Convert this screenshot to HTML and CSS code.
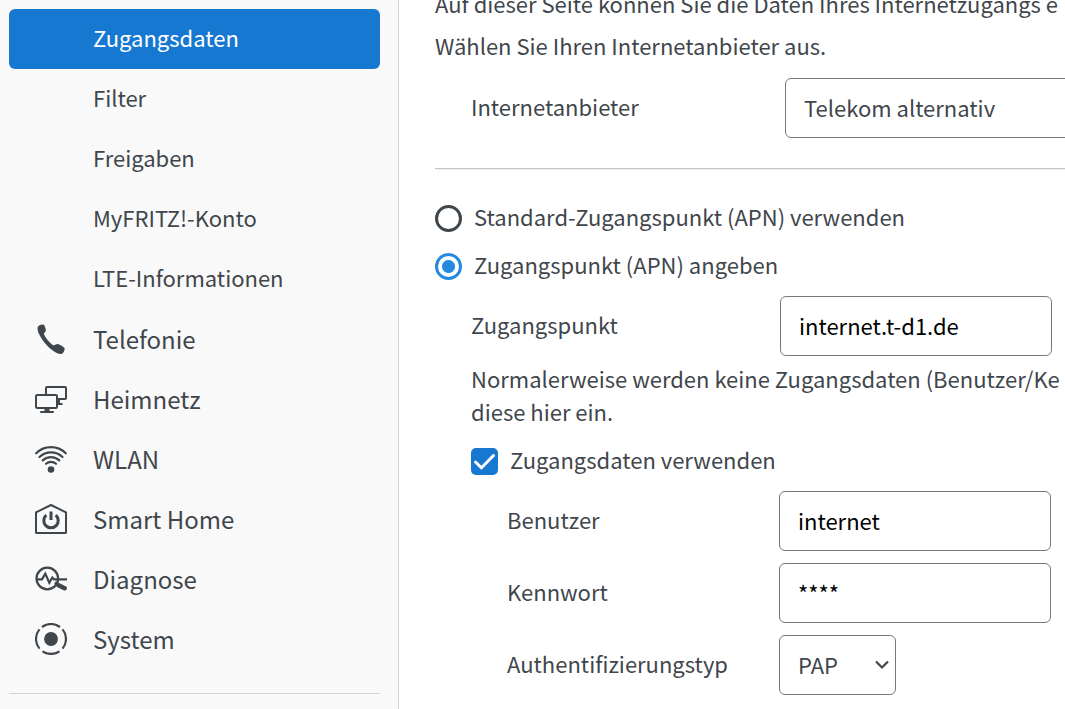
FILE: index.html
```html
<!DOCTYPE html>
<html lang="de">
<head>
<meta charset="utf-8">
<meta name="viewport" content="width=device-width, initial-scale=1">
<title>Zugangsdaten</title>
<link rel="stylesheet" href="styles.css">
</head>
<body>
<div class="app">
  <nav class="sidebar" aria-label="Menü">
    <ul class="menu">
      <li><a class="item sub active" href="#zugangsdaten" aria-current="page"><span>Zugangsdaten</span></a></li>
      <li><a class="item sub" href="#filter"><span>Filter</span></a></li>
      <li><a class="item sub" href="#freigaben"><span>Freigaben</span></a></li>
      <li><a class="item sub" href="#myfritz"><span>MyFRITZ!-Konto</span></a></li>
      <li><a class="item sub" href="#lte"><span>LTE-Informationen</span></a></li>
      <li><a class="item" href="#telefonie">
        <svg class="icon" viewBox="0 0 32 32" aria-hidden="true"><path fill="currentColor" d="M3 3.600C4.400 1.800 7.200 1.200 8.700 1.700C9.600 2.100 10.800 6 10.900 7.200C11 8.600 8.900 9.700 9 10.900C9.900 14.400 15 20.200 18.400 22.200C19.700 22.800 21.200 20.900 22.800 21.100C24.500 21.400 29.200 24.300 29.600 25.400C30 27.100 28.300 30.300 26.500 31C24.300 31.600 20.500 29.400 17.400 27.200C12.200 23.500 6.900 16.900 4 11C2.800 8.500 1.900 5.100 3 3.600Z"/></svg>
        <span>Telefonie</span></a></li>
      <li><a class="item" href="#heimnetz">
        <svg class="icon" viewBox="0 0 32 32" aria-hidden="true"><g fill="none" stroke="currentColor" stroke-width="2"><path d="M11 11V5Q11 4 12 4H30Q31 4 31 5V15Q31 16 30 16H23M24 17V20M22.500 21H27.500"/><rect x="1" y="12" width="21" height="13" rx="1.200"/><path d="M6 29H18" stroke-linecap="round"/></g><path fill="currentColor" d="M9.500 25H14.500V29H9.500Z"/></svg>
        <span>Heimnetz</span></a></li>
      <li><a class="item" href="#wlan">
        <svg class="icon" viewBox="0 0 32 32" aria-hidden="true"><circle cx="16" cy="26.500" r="3.300" fill="currentColor"/><g fill="none" stroke="currentColor" stroke-width="2.200" stroke-linecap="round"><path d="M1.200 10.300A21 21 0 0 1 30.800 10.300"/><path d="M4.500 14A16.500 16.500 0 0 1 27.500 14"/><path d="M7.700 17.400A12 12 0 0 1 24.300 17.400"/><path d="M11 20.800A7.500 7.500 0 0 1 21 20.800"/></g></svg>
        <span>WLAN</span></a></li>
      <li><a class="item" href="#smarthome">
        <svg class="icon" viewBox="0 0 32 32" aria-hidden="true"><g fill="none" stroke="currentColor" stroke-width="2"><path stroke-linejoin="round" d="M1 9.400L16 2L31 9.400V29.500Q31 30 30.400 30H1.600Q1 30 1 29.500Z"/><path stroke-width="3" d="M11.300 12.200A7.200 7.200 0 1 0 20.700 12.200M16 8.500V17"/></g></svg>
        <span>Smart Home</span></a></li>
      <li><a class="item" href="#diagnose">
        <svg class="icon" viewBox="0 0 32 32" aria-hidden="true"><g fill="none" stroke="currentColor" stroke-width="2.200"><circle cx="12.300" cy="15.500" r="10.800"/><path d="M1.200 16.300H7L10.300 10.600L14.300 19.700L17.300 14.500L19 16.300H32"/><path stroke-width="3" d="M20 19.500L24 22"/><path stroke-width="4.600" stroke-linecap="round" d="M23.500 22.200L29.600 25.200"/></g></svg>
        <span>Diagnose</span></a></li>
      <li><a class="item" href="#system">
        <svg class="icon" viewBox="0 0 32 32" aria-hidden="true"><circle cx="16" cy="16" r="6.900" fill="currentColor"/><path fill="none" stroke="currentColor" stroke-width="2.200" d="M7 4A15 15 0 0 1 25 4M27.500 6.400A15 15 0 0 1 27.500 25.600M24.500 28.300A15 15 0 0 1 7.500 28.300M4.500 25.600A15 15 0 0 1 4.500 6.400"/></svg>
        <span>System</span></a></li>
    </ul>
  </nav>
  <main class="content">
    <form class="form">
      <p class="text">Auf dieser Seite können Sie die Daten Ihres Internetzugangs e</p>
      <p class="text">Wählen Sie Ihren Internetanbieter aus.</p>
      <div class="row provider">
        <label for="provider">Internetanbieter</label>
        <select class="field wide" id="provider"><option>Telekom alternativ</option></select>
      </div>
      <hr class="rule">
      <div class="choice">
        <input class="radio" type="radio" name="apn" id="apn-default">
        <label for="apn-default">Standard-Zugangspunkt (APN) verwenden</label>
      </div>
      <div class="choice">
        <input class="radio" type="radio" name="apn" id="apn-custom" checked>
        <label for="apn-custom">Zugangspunkt (APN) angeben</label>
      </div>
      <div class="group">
        <div class="row apn">
          <label for="apn-name">Zugangspunkt</label>
          <input class="field" type="text" id="apn-name" value="internet.t-d1.de">
        </div>
        <p class="text">Normalerweise werden keine Zugangsdaten (Benutzer/Ke<br>diese hier ein.</p>
        <div class="choice">
          <input class="check" type="checkbox" id="use-login" checked>
          <label for="use-login">Zugangsdaten verwenden</label>
        </div>
        <div class="group">
          <div class="row">
            <label for="user">Benutzer</label>
            <input class="field" type="text" id="user" value="internet">
          </div>
          <div class="row">
            <label for="pass">Kennwort</label>
            <input class="field" type="text" id="pass" value="****">
          </div>
          <div class="row">
            <label for="auth">Authentifizierungstyp</label>
            <select class="field short" id="auth"><option>PAP</option></select>
          </div>
        </div>
      </div>
    </form>
  </main>
</div>
</body>
</html>
```
FILE: styles.css
```css
* {
  box-sizing: border-box;
}

body {
  margin: 0;
  background: #fff;
  color: #3f464c;
  font: 22px/33px "Noto Sans CJK SC", "Open Sans", sans-serif;
}

.app {
  display: flex;
  height: 100vh;
  overflow: hidden;
}

.sidebar {
  flex: 0 0 399px;
  padding: 9px 18px 0 9px;
  background: #f9f9f9;
  border-right: 1px solid #d6d6d6;
}

.menu {
  margin: 0;
  padding: 0 0 24px;
  list-style: none;
  border-bottom: 1px solid #d2d3d4;
}

.item {
  display: flex;
  align-items: center;
  gap: 26px;
  height: 60px;
  padding-left: 26px;
  border-radius: 6px;
  color: inherit;
  font-size: 24px;
  text-decoration: none;
}

.item span {
  padding-bottom: 2px;
}

.sub {
  padding-left: 84px;
  font-size: 22px;
}

.sub span,
label {
  padding-bottom: 4px;
}

.active {
  background: #1778d2;
  color: #fff;
}

.icon {
  flex: none;
  width: 32px;
  height: 32px;
}

.content {
  flex: 1;
  min-width: 0;
  padding-left: 36px;
  overflow: hidden;
}

/* The form is scrolled slightly past its first line. */
.form {
  min-width: 720px;
  margin-top: -13px;
}

.text {
  margin: 0 0 9px;
  white-space: nowrap;
}

.row {
  display: grid;
  grid-template-columns: 272px 1fr;
  align-items: center;
  padding: 6px 0;
}

.apn {
  grid-template-columns: 309px 1fr;
}

.provider {
  grid-template-columns: 314px 1fr;
  margin-top: 10px;
  padding-left: 36px;
}

.field {
  width: 272px;
  height: 60px;
  padding: 0 18px 2px;
  border: 1px solid #75797d;
  border-radius: 6px;
  background: #fff;
  color: #000;
  font: inherit;
}

select.field {
  appearance: none;
  color: #3f464c;
  background: #fff url("data:image/svg+xml,%3Csvg xmlns='http://www.w3.org/2000/svg' width='14' height='10' viewBox='0 0 14 10'%3E%3Cpath d='M1 1.500L7 7.500L13 1.500' fill='none' stroke='%233f464c' stroke-width='2.200'/%3E%3C/svg%3E") no-repeat right 6px center;
}

.wide {
  width: 100%;
}

.short {
  width: 117px;
}

.rule {
  height: 2px;
  margin: 24px 0;
  border: 0;
  border-top: 1px solid #c4c4c4;
  border-bottom: 1px solid #eee;
}

.choice {
  display: flex;
  align-items: center;
  gap: 12px;
  height: 48px;
}

.radio,
.check {
  appearance: none;
  flex: none;
  width: 27px;
  height: 27px;
  margin: 0;
}

.radio {
  border: 3px solid #3f464c;
  border-radius: 50%;
}

.radio:checked {
  border-color: #2489e0;
  background: radial-gradient(circle, #2489e0 6px, #fff 7px);
}

.check {
  border-radius: 5px;
}

.check:checked {
  background: #1778d2 url("data:image/svg+xml,%3Csvg xmlns='http://www.w3.org/2000/svg' viewBox='0 0 27 27'%3E%3Cpath d='M4.500 14L10.500 19.800L22.500 7.500' fill='none' stroke='white' stroke-width='3' stroke-linecap='round' stroke-linejoin='round'/%3E%3C/svg%3E");
}

.group {
  padding-left: 36px;
}
```
